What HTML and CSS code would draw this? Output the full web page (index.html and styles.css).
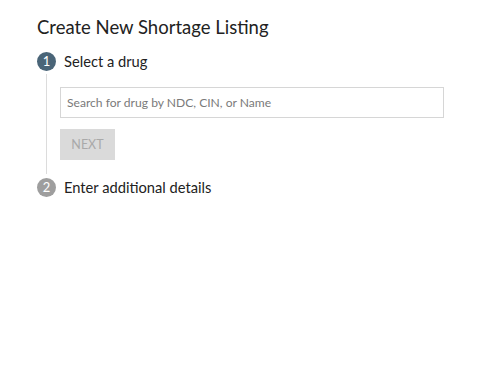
FILE: index.html
```html
<!DOCTYPE html>
<html lang="en">
<head>
  <meta charset="UTF-8" />
  <title>Create New Shortage Listing</title>
  <link rel="stylesheet" href="styles.css">
</head>
<body>
  <div class="page">
    <h1 class="title">Create New Shortage Listing</h1>

    <div class="steps">
      <div class="step">
        <div class="step-head">
          <span class="step-num active">1</span>
          <span class="step-label">Select a drug</span>
        </div>
        <div class="step-body">
          <input class="search" type="text" placeholder="Search for drug by NDC, CIN, or Name">
          <button class="next" disabled>NEXT</button>
        </div>
      </div>

      <div class="step">
        <div class="step-head">
          <span class="step-num">2</span>
          <span class="step-label">Enter additional details</span>
        </div>
      </div>
    </div>
  </div>
</body>
</html>
```

FILE: styles.css
```css
body {
  margin: 0;
  padding: 0;
  font-family: 'Lato', 'Noto Sans', sans-serif;
  background: #fff;
  color: #222;
}
.page {
  padding: 14px 37px;
}
.title {
  margin: 0 0 10px;
  font-size: 18.5px;
  font-weight: 400;
  line-height: 26px;
}
.step-head {
  display: flex;
  align-items: center;
  gap: 8px;
  height: 22px;
}
.step-num {
  width: 19px;
  height: 19px;
  border-radius: 50%;
  background: #9e9e9e;
  color: #fff;
  font-size: 13px;
  display: flex;
  justify-content: center;
  align-items: center;
}
.step-num.active {
  background: #4a6578;
}
.step-label {
  font-size: 14.7px;
}
/* isi langkah dengan garis vertikal di kiri */
.step-body {
  margin: 2px 0 2px 9px;
  border-left: 1px solid #dcdcdc;
  padding: 13px 0 14px 13px;
  display: flex;
  flex-direction: column;
  align-items: flex-start;
  gap: 11px;
}
.search {
  box-sizing: border-box;
  width: 384px;
  height: 31px;
  border: 1px solid #d6d6d6;
  padding: 0 6px;
  font-family: inherit;
  font-size: 12.1px;
  color: #333;
  outline: none;
}
.search::placeholder {
  color: #7a7a7a;
}
.next {
  width: 55px;
  height: 31px;
  border: none;
  background: #dadada;
  color: #a9a9a9;
  font-family: inherit;
  font-size: 12.5px;
  padding: 0;
}
```
